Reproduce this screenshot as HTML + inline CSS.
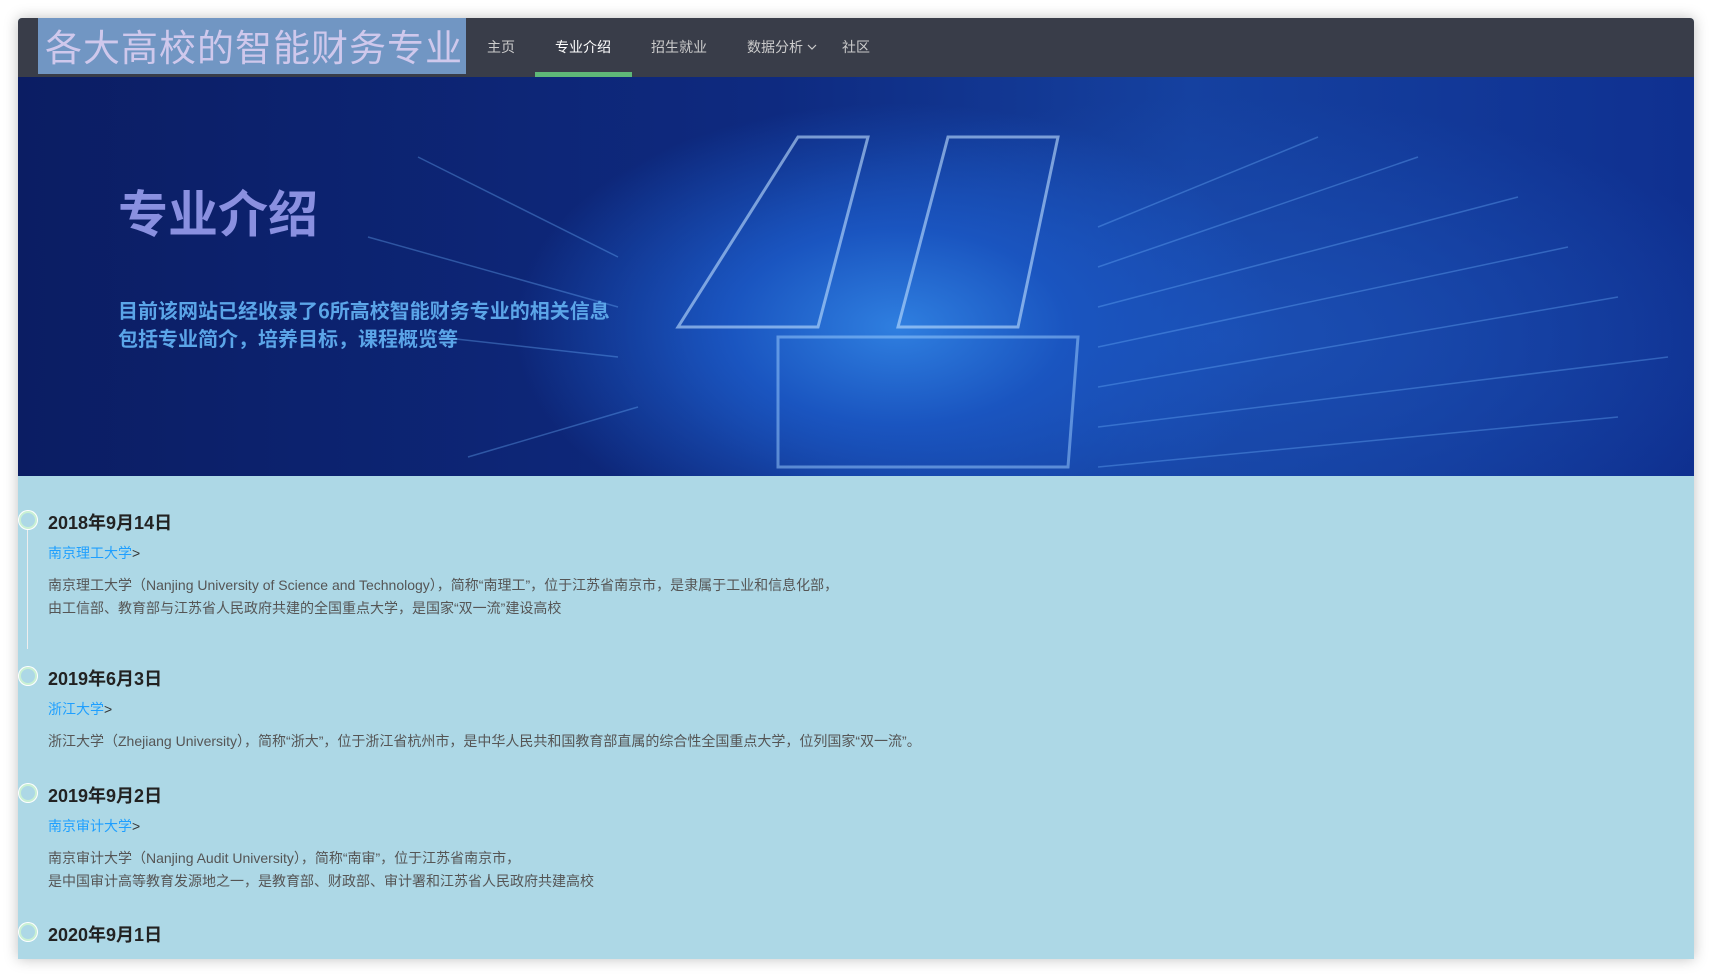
<!DOCTYPE html>
<html><head><meta charset="utf-8"><style>
*{margin:0;padding:0;box-sizing:border-box}
body{width:1713px;height:978px;background:#fff;font-family:"Liberation Sans","Noto Sans CJK SC",sans-serif;overflow:hidden;position:relative}
.win{position:absolute;left:18px;top:18px;width:1676px;height:941px;box-shadow:0 0 14px rgba(0,0,0,.25);overflow:hidden;background:#add8e6;border-radius:4px 4px 0 0}
.nav{position:absolute;left:0;top:0;width:100%;height:59px;background:#393d49}
.logo{position:absolute;left:20px;top:0;width:428px;height:56px;background:#7196c3;color:#cfc8ec;font-size:37px;line-height:54px;padding-left:7px;letter-spacing:1px;font-family:"Noto Sans CJK SC",sans-serif;white-space:nowrap}
.nav a{position:absolute;top:0;line-height:58px;font-size:14px;color:#ccc;text-decoration:none}
.nav a.on{color:#fff}
.ul{position:absolute;left:517px;top:54px;width:97px;height:5px;background:#5fb878}
.banner{position:absolute;left:0;top:59px;width:100%;height:399px;overflow:hidden;
background:radial-gradient(ellipse 480px 280px at 880px 250px,#2f7fe0 0%,#1a55c0 35%,rgba(16,50,150,0) 80%),radial-gradient(ellipse 700px 300px at 1200px 260px,#1b4fb4 0%,rgba(20,60,160,0) 80%),linear-gradient(90deg,#0b1d63 0%,#0e2a80 45%,#1541a0 70%,#0f3090 100%)}
.h1{position:absolute;left:100px;top:98px;font-size:50px;font-weight:bold;color:#8a90e0;font-family:"Noto Sans CJK SC",sans-serif}
.sub{position:absolute;left:100px;top:219px;font-size:20px;font-weight:bold;color:#5ba5e8;line-height:28px;font-family:"Noto Sans CJK SC",sans-serif;white-space:nowrap}
.tl{position:absolute;left:0;top:438px;width:100%}
.line{position:absolute;left:9px;top:68px;width:1px;background:#eee}
.item{position:absolute;left:0}
.dot{position:absolute;left:1px;top:-10px;width:18px;height:18px;border:2px solid #c9f0d4;border-radius:50%;background:#add8e6;box-shadow:0 0 0 1px #fff}
.date{position:absolute;left:30px;top:-12px;font-size:18px;font-weight:bold;color:#222;white-space:nowrap}
.lk{position:absolute;left:30px;font-size:14px;color:#1e9fff;white-space:nowrap}
.lk span{color:#333}
.ds{position:absolute;left:30px;font-size:14px;color:#555;line-height:23px;white-space:nowrap}
</style></head><body>
<div class="win">
<div class="nav">
<div class="logo">各大高校的智能财务专业</div>
<a style="left:469px">主页</a>
<a class="on" style="left:537px">专业介绍</a>
<a style="left:633px">招生就业</a>
<a style="left:729px">数据分析 <svg width="10" height="7" viewBox="0 0 10 7" style="vertical-align:1px"><path d="M1 1 L5 5 L9 1" stroke="#ccc" fill="none" stroke-width="1.2"/></svg></a>
<a style="left:824px">社区</a>
<div class="ul"></div>
</div>
<div class="banner">
<svg width="1676" height="399" style="position:absolute;left:0;top:0" fill="none" stroke="#6fb4ff" stroke-opacity=".45" stroke-width="1.5">
<path d="M660 250 L780 60 L850 60 L800 250 Z M880 250 L930 60 L1040 60 L1000 250Z" stroke="#bfe0ff" stroke-opacity=".6" stroke-width="3"/>
<path d="M760 260 L1060 260 L1050 390 L760 390Z" stroke="#9fd0ff" stroke-opacity=".5" stroke-width="3"/>
<g stroke-opacity=".35"><path d="M1080 150 L1300 60 M1080 190 L1400 80 M1080 230 L1500 120 M1080 270 L1550 170 M1080 310 L1600 220 M1080 350 L1650 280 M1080 390 L1600 340 M600 180 L400 80 M600 230 L350 160 M600 280 L420 260 M620 330 L450 380"/></g>
</svg>
<div class="h1">专业介绍</div>
<div class="sub">目前该网站已经收录了6所高校智能财务专业的相关信息<br>包括专业简介，培养目标，课程概览等</div>
</div>
<div class="tl">
<div class="line" style="height:125px"></div>
<div class="item" style="top:65px"><div class="dot"></div><div class="date">2018年9月14日</div>
<div class="lk" style="top:22px">南京理工大学<span>&gt;</span></div>
<div class="ds" style="top:53px">南京理工大学（Nanjing University of Science and Technology），简称“南理工”，位于江苏省南京市，是隶属于工业和信息化部，<br>由工信部、教育部与江苏省人民政府共建的全国重点大学，是国家“双一流”建设高校</div></div>
<div class="item" style="top:221px"><div class="dot"></div><div class="date">2019年6月3日</div>
<div class="lk" style="top:22px">浙江大学<span>&gt;</span></div>
<div class="ds" style="top:53px">浙江大学（Zhejiang University），简称“浙大”，位于浙江省杭州市，是中华人民共和国教育部直属的综合性全国重点大学，位列国家“双一流”。</div></div>
<div class="item" style="top:338px"><div class="dot"></div><div class="date">2019年9月2日</div>
<div class="lk" style="top:22px">南京审计大学<span>&gt;</span></div>
<div class="ds" style="top:53px">南京审计大学（Nanjing Audit University），简称“南审”，位于江苏省南京市，<br>是中国审计高等教育发源地之一，是教育部、财政部、审计署和江苏省人民政府共建高校</div></div>
<div class="item" style="top:477px"><div class="dot"></div><div class="date">2020年9月1日</div></div>
</div>
</div>
</body></html>
